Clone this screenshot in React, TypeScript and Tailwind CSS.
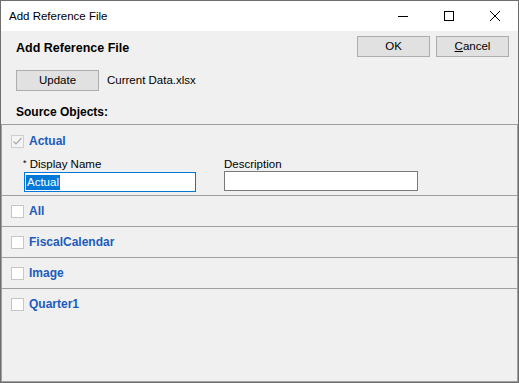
import React from 'react';

const FONT = "font-['Liberation_Sans','Arial',sans-serif]";

function CheckBox({ checked = false }: { checked?: boolean }) {
  return (
    <div className="w-[13px] h-[13px] border border-[#c6c6c6] bg-white flex items-center justify-center shrink-0">
      {checked && (
        <svg width="11" height="11" viewBox="0 0 11 11">
          <path d="M1.5 5.5 L4 8 L9.5 2" fill="none" stroke="#a9a9a9" strokeWidth="1.2" />
        </svg>
      )}
    </div>
  );
}

function SourceRow({ label, last = false }: { label: string; last?: boolean }) {
  return (
    <div className={`h-[31px] pt-[9px] pl-[9px] flex items-start gap-[5px] ${last ? '' : 'border-b border-[#a0a0a0]'}`}>
      <CheckBox />
      <span className="text-[12px] leading-[13px] font-bold text-[#1c5bbd]">{label}</span>
    </div>
  );
}

export default function App() {
  const objects = ['All', 'FiscalCalendar', 'Image', 'Quarter1'];

  return (
    <div className={`w-[519px] h-[383px] border border-[#6e6e6e] flex flex-col text-black ${FONT}`}>
      {/* Title bar */}
      <div className="h-[30px] bg-white flex items-center shrink-0">
        <span className="pl-[8px] pt-[1px] text-[11.5px] flex-1">Add Reference File</span>
        <div className="w-[46px] h-[30px] flex items-center justify-center">
          <svg width="10" height="10" viewBox="0 0 10 10">
            <path d="M0 5.5 H10" stroke="#000" strokeWidth="1" />
          </svg>
        </div>
        <div className="w-[46px] h-[30px] flex items-center justify-center">
          <svg width="10" height="10" viewBox="0 0 10 10">
            <rect x="0.5" y="0.5" width="9" height="9" fill="none" stroke="#000" strokeWidth="1" />
          </svg>
        </div>
        <div className="w-[46px] h-[30px] flex items-center justify-center">
          <svg width="10" height="10" viewBox="0 0 10 10">
            <path d="M0 0 L10 10 M10 0 L0 10" stroke="#000" strokeWidth="1" />
          </svg>
        </div>
      </div>

      {/* Client area */}
      <div className="flex-1 bg-[#f0f0f0] flex flex-col">
        <div className="pl-[15px] pr-[9px] pt-[5px]">
          <div className="flex items-center h-[21px]">
            <span className="text-[12.5px] font-bold flex-1 mt-[4px]">Add Reference File</span>
            <button className="w-[73px] h-[21px] border border-[#adadad] bg-[#e1e1e1] text-[11.5px]">OK</button>
            <button className="w-[73px] h-[21px] ml-[6px] border border-[#adadad] bg-[#e1e1e1] text-[11.5px]">
              <span className="underline">C</span>ancel
            </button>
          </div>
          <div className="flex items-center mt-[13px]">
            <button className="w-[83px] h-[21px] border border-[#adadad] bg-[#e1e1e1] text-[11.5px]">Update</button>
            <span className="ml-[8px] text-[11.5px]">Current Data.xlsx</span>
          </div>
          <div className="mt-[14px] mb-[5px] text-[12px] leading-[14px] font-bold">Source Objects:</div>
        </div>

        {/* Source objects panel */}
        <div className="flex-1 border border-[#a0a0a0] bg-[#f0f0f0] flex flex-col">
          <div className="h-[71px] border-b border-[#a0a0a0] pt-[10px]">
            <div className="pl-[9px] flex items-start gap-[5px]">
              <div className="w-[13px] h-[13px] border border-[#cfcfcf] bg-[#f4f4f4] flex items-center justify-center shrink-0">
                <svg width="11" height="11" viewBox="0 0 11 11">
                  <path d="M1.5 5.5 L4 8 L9.5 2" fill="none" stroke="#a9a9a9" strokeWidth="1.2" />
                </svg>
              </div>
              <span className="text-[12px] leading-[13px] font-bold text-[#1c5bbd]">Actual</span>
            </div>
            <div className="flex mt-[9px] pl-[21px]">
              <div className="flex flex-col w-[201px]">
                <span className="text-[11.5px] leading-[14px]">
                  <sup className="text-[9px] top-[-0.2em]">*</sup> Display Name
                </span>
                <div className="mt-[1px] ml-[1px] w-[172px] h-[20px] border border-[#0078d7] bg-white flex items-center px-[1px]">
                  <span className="bg-[#0078d7] text-white text-[11.5px] leading-[15px] px-[1px]">Actual</span>
                </div>
              </div>
              <div className="flex flex-col">
                <span className="text-[11.5px] leading-[14px]">Description</span>
                <div className="w-[194px] h-[20px] border border-[#7a7a7a] bg-white" />
              </div>
            </div>
          </div>
          {objects.map((o, i) => (
            <SourceRow key={o} label={o} last={i === objects.length - 1} />
          ))}
        </div>
      </div>
    </div>
  );
}
